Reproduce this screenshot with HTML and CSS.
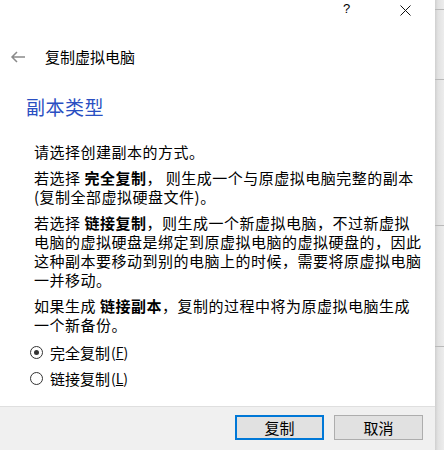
FILE: index.html
```html
<!DOCTYPE html>
<html lang="zh-CN">
<head>
    <meta charset="UTF-8">
    <title>复制虚拟电脑</title>
    <link rel="stylesheet" href="styles.css">
</head>
<body>
    <div class="dialog">
        <div class="titlebar">
            <span class="help">?</span>
            <span class="close">
                <svg width="11" height="11" viewBox="0 0 11 11"><path d="M0.5 0.5 L10.5 10.5 M10.5 0.5 L0.5 10.5" stroke="#111" stroke-width="1" fill="none"/></svg>
            </span>
        </div>

        <div class="header">
            <svg class="back" width="16" height="12" viewBox="0 0 16 12"><path d="M15 6 H2 M7 1 L2 6 L7 11" stroke="#8a8a8a" stroke-width="1.5" fill="none"/></svg>
            <span class="title">复制虚拟电脑</span>
        </div>

        <div class="content">
            <h2>副本类型</h2>
            <div class="paras">
                <p>请选择创建副本的方式。</p>
                <p>若选择 <b>完全复制</b>， 则生成一个与原虚拟电脑完整的副本<br>(复制全部虚拟硬盘文件)。</p>
                <p>若选择 <b>链接复制</b>，则生成一个新虚拟电脑，不过新虚拟<br>电脑的虚拟硬盘是绑定到原虚拟电脑的虚拟硬盘的，因此<br>这种副本要移动到别的电脑上的时候，需要将原虚拟电脑<br>一并移动。</p>
                <p>如果生成 <b>链接副本</b>，复制的过程中将为原虚拟电脑生成<br>一个新备份。</p>
            </div>
            <div class="options">
                <label class="option"><span class="radio checked"></span>完全复制<span class="key">(<u>F</u>)</span></label>
                <label class="option"><span class="radio"></span>链接复制<span class="key">(<u>L</u>)</span></label>
            </div>
        </div>

        <div class="footer">
            <button class="primary">复制</button>
            <button>取消</button>
        </div>
    </div>
    <div class="side">
        <div class="side-line l1"></div>
        <div class="side-line l2"></div>
        <div class="side-line l3"></div>
        <div class="side-line l4"></div>
    </div>
</body>
</html>
```

FILE: styles.css
```css
body {
    margin: 0;
    display: flex;
    height: 450px;
    overflow: hidden;
    font-family: "Noto Sans CJK SC", "Noto Sans", sans-serif;
    color: #000;
    background-color: #e8e8e8;
}
.dialog {
    width: 435px;
    height: 450px;
    background-color: #fff;
    display: flex;
    flex-direction: column;
}
.titlebar {
    height: 20px;
    position: relative;
}
.help {
    position: absolute;
    left: 343px;
    top: 1px;
    font-family: "Liberation Sans", sans-serif;
    font-size: 13px;
    line-height: 16px;
}
.close {
    position: absolute;
    left: 400px;
    top: 5px;
    line-height: 0;
}
.header {
    margin-top: 25px;
    height: 24px;
    display: flex;
    align-items: center;
}
.back {
    margin-left: 10px;
}
.title {
    margin-left: 19px;
    font-size: 15px;
    line-height: 24px;
}
.content {
    flex: 1;
    padding-left: 26px;
}
h2 {
    margin: 25px 0 0;
    font-size: 19px;
    font-weight: normal;
    line-height: 26px;
    letter-spacing: 0.5px;
    color: #2a4fc2;
}
.paras {
    margin-top: 22px;
    padding-left: 8px;
}
.paras p {
    margin: 0 0 7px;
    font-size: 15px;
    line-height: 19px;
    letter-spacing: 0.5px;
    white-space: nowrap;
}
.options {
    margin-top: -2px;
    padding-left: 4px;
}
.option {
    display: flex;
    align-items: center;
    height: 26px;
    font-size: 15px;
}
.radio {
    width: 11px;
    height: 11px;
    border: 1px solid #333;
    border-radius: 50%;
    margin-right: 7px;
    position: relative;
}
.radio.checked::after {
    content: "";
    position: absolute;
    left: 3px;
    top: 3px;
    width: 5px;
    height: 5px;
    border-radius: 50%;
    background-color: #333;
}
.key {
    font-size: 14px;
    margin-left: 1px;
}
.footer {
    height: 44px;
    border-top: 1px solid #dfdfdf;
    background-color: #f0f0f0;
    display: flex;
    justify-content: flex-end;
    align-items: flex-start;
    gap: 10px;
    padding: 8px 12px 0 0;
    box-sizing: border-box;
}
button {
    width: 89px;
    height: 25px;
    border: 1px solid #adadad;
    background-color: #e1e1e1;
    font-family: "Noto Sans CJK SC", sans-serif;
    font-size: 15px;
    padding: 0;
    color: #000;
}
button.primary {
    border: 2px solid #0078d7;
}
.side {
    flex: 1;
    position: relative;
    background: linear-gradient(to right, #cfcfcf, #e2e2e2 3px, #ececec);
}
.side-line {
    position: absolute;
    left: 0;
    right: 0;
    height: 1px;
    background-color: #b9b9b9;
}
.l1 { top: 9px; }
.l2 { top: 79px; }
.l3 { top: 225px; }
.l4 { top: 346px; }
```
